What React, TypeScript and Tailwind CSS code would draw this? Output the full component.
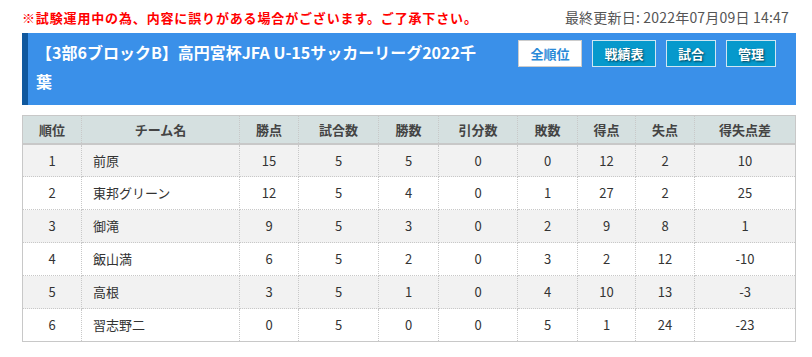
import React from "react";

const rows = [
  ["1", "前原", "15", "5", "5", "0", "0", "12", "2", "10"],
  ["2", "東邦グリーン", "12", "5", "4", "0", "1", "27", "2", "25"],
  ["3", "御滝", "9", "5", "3", "0", "2", "9", "8", "1"],
  ["4", "飯山満", "6", "5", "2", "0", "3", "2", "12", "-10"],
  ["5", "高根", "3", "5", "1", "0", "4", "10", "13", "-3"],
  ["6", "習志野二", "0", "5", "0", "0", "5", "1", "24", "-23"],
];

const heads = ["順位", "チーム名", "勝点", "試合数", "勝数", "引分数", "敗数", "得点", "失点", "得失点差"];
const widths = [59, 158, 59, 80, 60, 79, 60, 58, 59, 101];

export default function App() {
  return (
    <div
      className="w-[812px] h-[357px] bg-white overflow-hidden"
      style={{ fontFamily: '"Noto Sans CJK JP", "Noto Sans", sans-serif' }}
    >
      <div className="ml-[22px] w-[774px]">
        <div className="flex justify-between items-center h-[33px] pt-[2px]">
          <span className="text-[13px] font-bold text-[#ff0000] tracking-[0.85px]">
            ※試験運用中の為、内容に誤りがある場合がございます。ご了承下さい。
          </span>
          <span className="text-[14px] text-[#555] mr-[7px] tracking-[0.2px]">最終更新日: 2022年07月09日 14:47</span>
        </div>
        <div className="flex bg-[#3a90e9] border-l-[6px] border-[#10589e] h-[72px]">
          <div className="w-[454px] shrink-0 pl-[8px] pt-[5px] text-white font-bold text-[16px] leading-[29px]">
            【3部6ブロックB】高円宮杯JFA U-15サッカーリーグ2022千葉
          </div>
          <div className="flex gap-[10px] ml-auto mr-[20px] mt-[7px] h-[27px]">
            <div className="w-[64px] h-[27px] bg-white border border-[#ccc] text-[#2a8ad8] text-[13px] font-bold flex items-center justify-center">
              全順位
            </div>
            {[["戦績表", 64], ["試合", 50], ["管理", 50]].map(([t, w]) => (
              <div
                key={t as string}
                style={{ width: w as number, textShadow: "1px 1px 2px rgba(0,0,0,0.6)" }}
                className="h-[27px] bg-[#0699cc] border border-[#cfe6f2] text-white text-[13px] font-bold flex items-center justify-center"
              >
                {t}
              </div>
            ))}
          </div>
        </div>
        <table className="mt-[10px] w-[773px] border-collapse border border-[#c8c8c8] table-fixed text-[13px] text-[#333]">
          <colgroup>
            {widths.map((w, i) => (
              <col key={i} style={{ width: w }} />
            ))}
          </colgroup>
          <thead>
            <tr className="bg-[#d5e0e0] h-[28px]">
              {heads.map((h, i) => (
                <th
                  key={i}
                  className="font-bold text-[#444] border-r border-dotted border-[#c8c8c8] text-center p-0"
                  style={{ borderBottomStyle: "solid", borderBottomWidth: 2, borderBottomColor: "#c8c8c8" }}
                >
                  {h}
                </th>
              ))}
            </tr>
          </thead>
          <tbody>
            {rows.map((r, ri) => (
              <tr key={ri} className={ri % 2 === 0 ? "bg-[#f2f2f2] h-[33px]" : "bg-white h-[33px]"}>
                {r.map((c, ci) => (
                  <td
                    key={ci}
                    className={
                      "border border-dotted border-[#c8c8c8] p-0 " +
                      (ci === 1 ? "text-left pl-[11px]" : "text-center")
                    }
                  >
                    {c}
                  </td>
                ))}
              </tr>
            ))}
          </tbody>
        </table>
      </div>
    </div>
  );
}
